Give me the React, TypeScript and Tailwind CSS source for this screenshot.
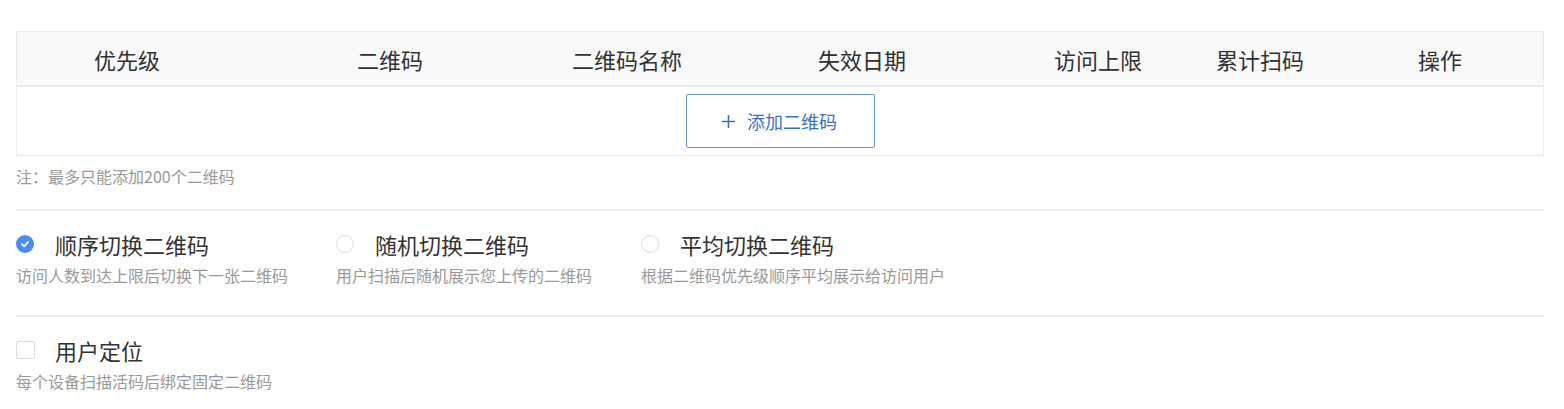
import React from "react";

const font = { fontFamily: '"Noto Sans CJK SC", "Noto Sans", sans-serif' };

const cols = ["优先级", "二维码", "二维码名称", "失效日期", "访问上限", "累计扫码", "操作"];

function RadioOption({
  checked,
  title,
  desc,
  width,
}: {
  checked?: boolean;
  title: string;
  desc: string;
  width: string;
}) {
  return (
    <div className={`flex flex-col ${width}`}>
      <div className="flex items-center h-[30px]">
        {checked ? (
          <span className="w-[18px] h-[18px] rounded-full bg-[#4a8cef] flex items-center justify-center shrink-0">
            <svg width="10" height="10" viewBox="0 0 10 10">
              <path d="M2 5.2 L4.2 7.3 L8 3" fill="none" stroke="white" strokeWidth="1.8" strokeLinecap="round" strokeLinejoin="round" />
            </svg>
          </span>
        ) : (
          <span className="w-[18px] h-[18px] rounded-full border border-[#dcdcdc] bg-white shrink-0" />
        )}
        <span className="ml-[21px] text-[22px] leading-[30px] text-[#333333]">{title}</span>
      </div>
      <div className="mt-[4px] text-[16px] leading-[24px] text-[#999999] whitespace-nowrap">{desc}</div>
    </div>
  );
}

export default function App() {
  return (
    <div className="bg-white w-[1564px] h-[409px] pt-[31px] pl-[16px] pr-[20px]" style={font}>
      <div className="border border-[#ebebeb]">
        <div className="grid grid-cols-[220px_306px_168px_302px_170px_154px_1fr] h-[55px] bg-[#f9f9f9] border-b-2 border-[#e9e9ee] items-center">
          {cols.map((c) => (
            <div key={c} className="text-center text-[22px] text-[#303133] leading-[30px]">
              {c}
            </div>
          ))}
        </div>
        <div className="h-[68px] flex items-center justify-center bg-white">
          <button className="w-[189px] h-[54px] border border-[#6b97d6] rounded-[2px] flex items-center justify-center text-[#3b70c4] text-[18px] bg-white">
            <svg width="15" height="15" viewBox="0 0 15 15" className="mr-[11px] -ml-[2px]">
              <path d="M7.5 1 V14 M1 7.5 H14" stroke="#3b70c4" strokeWidth="1.6" fill="none" />
            </svg>
            <span>添加二维码</span>
          </button>
        </div>
      </div>
      <div className="mt-[8px] text-[16px] leading-[24px] text-[#999999]">注：最多只能添加200个二维码</div>
      <div className="mt-[21px] h-[2px] bg-[#efefef]" />
      <div className="pt-[18px] flex">
        <RadioOption checked width="w-[320px]" title="顺序切换二维码" desc="访问人数到达上限后切换下一张二维码" />
        <RadioOption width="w-[305px]" title="随机切换二维码" desc="用户扫描后随机展示您上传的二维码" />
        <RadioOption width="w-[320px]" title="平均切换二维码" desc="根据二维码优先级顺序平均展示给访问用户" />
      </div>
      <div className="mt-[28px] h-[2px] bg-[#efefef]" />
      <div className="pt-[18px] flex flex-col">
        <div className="flex items-center h-[30px]">
          <span className="w-[19px] h-[18px] rounded-[2px] border border-[#dcdcdc] bg-white shrink-0" />
          <span className="ml-[20px] text-[22px] leading-[30px] text-[#333333]">用户定位</span>
        </div>
        <div className="mt-[4px] text-[16px] leading-[24px] text-[#999999]">每个设备扫描活码后绑定固定二维码</div>
      </div>
    </div>
  );
}
